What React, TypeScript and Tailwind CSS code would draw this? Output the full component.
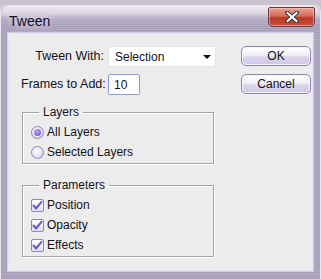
import React from 'react'

const font = { fontFamily: '"Liberation Sans", Arial, sans-serif' }

function PushButton({ label }: { label: string }) {
  return (
    <button
      type="button"
      className="w-[70px] h-[20px] rounded-[5px] border border-[#8e86b0] bg-[linear-gradient(#ffffff,#f1eff7_45%,#dcd6ec_55%,#cfc6e6)] shadow-[inset_0_0_0_1px_#f7f5fc] text-[12px] leading-[18px] text-[#111]"
    >
      {label}
    </button>
  )
}

function Radio({ checked, label }: { checked?: boolean; label: string }) {
  return (
    <div className="flex items-center h-[20px] gap-[3px]">
      <span className="w-[13px] h-[13px] rounded-full border border-[#8e86b8] bg-[radial-gradient(circle_at_40%_35%,#ffffff,#e4def2_60%,#cdc4e6)] flex items-center justify-center">
        {checked && <span className="w-[7px] h-[7px] rounded-full bg-[radial-gradient(circle_at_40%_35%,#b7a4f2,#6a48cf)]" />}
      </span>
      <span>{label}</span>
    </div>
  )
}

function Check({ label }: { label: string }) {
  return (
    <div className="flex items-center h-[20px] gap-[3px]">
      <span className="w-[13px] h-[13px] rounded-[2px] border border-[#8e86b8] bg-[linear-gradient(#ffffff,#e3ddf3)] flex items-center justify-center">
        <svg width="11" height="11" viewBox="0 0 11 11">
          <path d="M1.5 5.5 L4 8.5 L9.5 1.8" fill="none" stroke="#7052d4" strokeWidth="2" strokeLinecap="round" strokeLinejoin="round" />
        </svg>
      </span>
      <span>{label}</span>
    </div>
  )
}

function Group({ title, children }: { title: string; children: React.ReactNode }) {
  return (
    <fieldset className="ml-[1px] w-[192px] border border-[#a3a3a3] shadow-[inset_1px_1px_0_#fff,1px_1px_0_#fff] pl-[8px] pb-[1px]">
      <legend className="ml-[8px] px-[4px] leading-[14px]">{title}</legend>
      <div className="mt-[3px]">{children}</div>
    </fieldset>
  )
}

export default function App() {
  return (
    <div className="w-[321px] h-[279px] bg-[#c9c3cf] overflow-hidden text-[12px] text-[#141020]" style={font}>
      <div className="mt-[5px] h-[274px] rounded-t-[7px] border-t border-x border-[#e9e6ee] bg-[repeating-linear-gradient(#a79db9_0px,#a79db9_1px,#b3aac4_1px,#b3aac4_2px)] flex flex-col relative">
        <div className="h-[27px] rounded-t-[7px] bg-[linear-gradient(#eeebf2,#dcd7e3_25%,rgba(190,182,204,0.5)_50%,rgba(170,160,189,0)_75%)] flex items-center pl-[8px] pt-[3px]">
          <span className="text-[14px] text-[#120a2a] [text-shadow:0_0_6px_#ffffff]">Tween</span>
        </div>
        <div className="absolute right-[5px] top-[1px] w-[47px] h-[20px] rounded-b-[5px] rounded-t-[2px] border border-[#6a3a3a] bg-[linear-gradient(#e9a395,#d36b5c_45%,#b93424_55%,#c9543c)] flex items-center justify-center shadow-[inset_0_0_0_1px_rgba(255,210,200,0.5)]">
          <svg width="14" height="12" viewBox="0 0 14 12">
            <path d="M2 1.5 L12 10.5 M12 1.5 L2 10.5" stroke="#3a3a4a" strokeWidth="4" strokeLinecap="square" />
            <path d="M2.5 2 L11.5 10 M11.5 2 L2.5 10" stroke="#ffffff" strokeWidth="2" strokeLinecap="square" />
          </svg>
        </div>
        <div className="mx-[7px] h-[238px] border border-[#e7e4f4] bg-[#ececec] shadow-[0_0_0_1px_#d2cce6] flex">
          <div className="w-[215px] pl-[12px] pt-[12px]">
            <div className="flex items-center gap-[4px]">
              <span className="w-[83px] text-right whitespace-nowrap text-[12.5px]">Tween With:</span>
              <div className="w-[108px] h-[21px] bg-white border border-[#e3e3e3] flex items-center pl-[6px] pr-[4px]">
                <span className="flex-1">Selection</span>
                <svg width="8" height="4" viewBox="0 0 8 4"><path d="M0 0 H8 L4 4 Z" fill="#111" /></svg>
              </div>
            </div>
            <div className="flex items-center gap-[4px] mt-[7px]">
              <span className="w-[83px] text-right whitespace-nowrap text-[12.5px]">Frames to Add:</span>
              <div className="w-[32px] h-[21px] bg-white border border-[#8f9bd6] rounded-[2px] flex items-center pl-[5px]">10</div>
            </div>
            <div className="mt-[10px]">
              <Group title="Layers">
                <Radio checked label="All Layers" />
                <Radio label="Selected Layers" />
              </Group>
            </div>
            <div className="mt-[14px]">
              <Group title="Parameters">
                <Check label="Position" />
                <Check label="Opacity" />
                <Check label="Effects" />
              </Group>
            </div>
          </div>
          <div className="pl-[17px] pt-[12px] flex flex-col gap-[8px]">
            <PushButton label="OK" />
            <PushButton label="Cancel" />
          </div>
        </div>
      </div>
    </div>
  )
}
